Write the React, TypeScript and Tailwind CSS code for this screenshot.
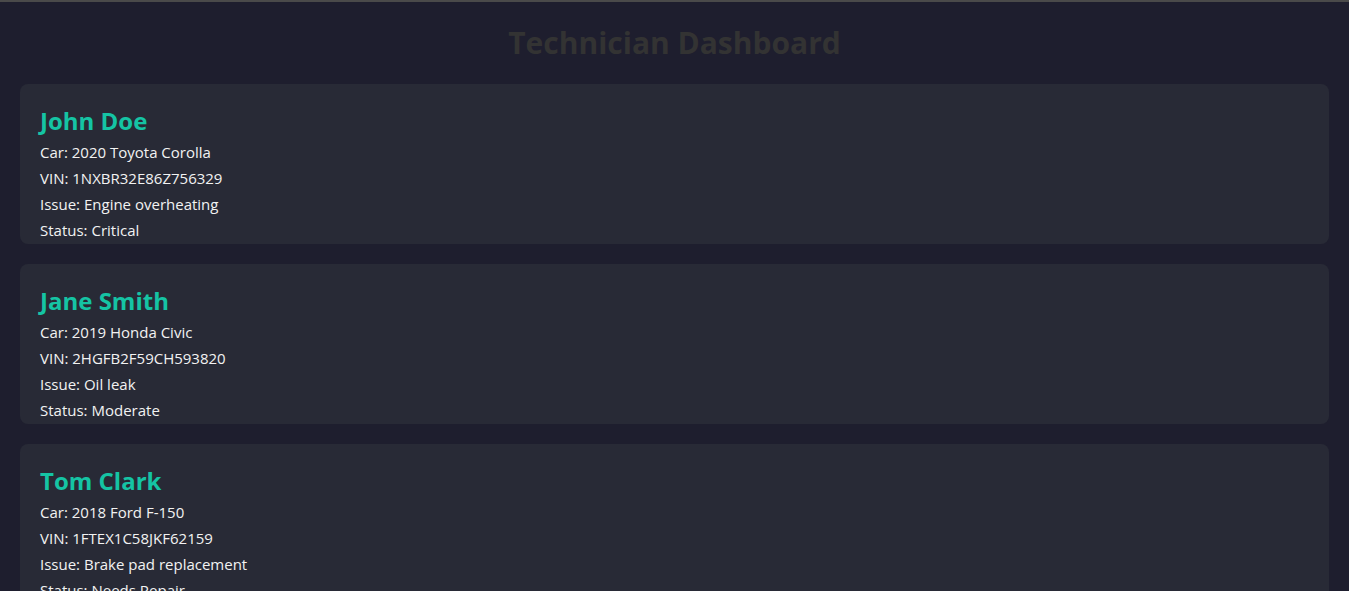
const JOBS = [
  {
    name: 'John Doe',
    car: '2020 Toyota Corolla',
    vin: '1NXBR32E86Z756329',
    issue: 'Engine overheating',
    status: 'Critical'
  },
  {
    name: 'Jane Smith',
    car: '2019 Honda Civic',
    vin: '2HGFB2F59CH593820',
    issue: 'Oil leak',
    status: 'Moderate'
  },
  {
    name: 'Tom Clark',
    car: '2018 Ford F-150',
    vin: '1FTEX1C58JKF62159',
    issue: 'Brake pad replacement',
    status: 'Needs Repair'
  }
];

export default function App() {
  return (
    <div className="min-h-[591px] bg-[#1e1e2e] border-t-2 border-[#4a4a4a] px-5 font-['Open_Sans',sans-serif]">
      <h1 className="h-[82px] pb-[2px] flex items-center justify-center text-[30px] font-bold text-[#333333]">
        Technician Dashboard
      </h1>
      <div className="flex flex-col gap-5">
        {JOBS.map((job) => (
          <div key={job.vin} className="h-[160px] overflow-hidden rounded-lg bg-[#282a36] px-5 pt-[19px]">
            <h2 className="text-[24px] leading-[36px] font-bold text-[#15c4a4]">{job.name}</h2>
            <p className="text-[15px] leading-[26px] text-[#f2f2f2]">Car: {job.car}</p>
            <p className="text-[15px] leading-[26px] text-[#f2f2f2]">VIN: {job.vin}</p>
            <p className="text-[15px] leading-[26px] text-[#f2f2f2]">Issue: {job.issue}</p>
            <p className="text-[15px] leading-[26px] text-[#f2f2f2]">Status: {job.status}</p>
          </div>
        ))}
      </div>
    </div>
  );
}
